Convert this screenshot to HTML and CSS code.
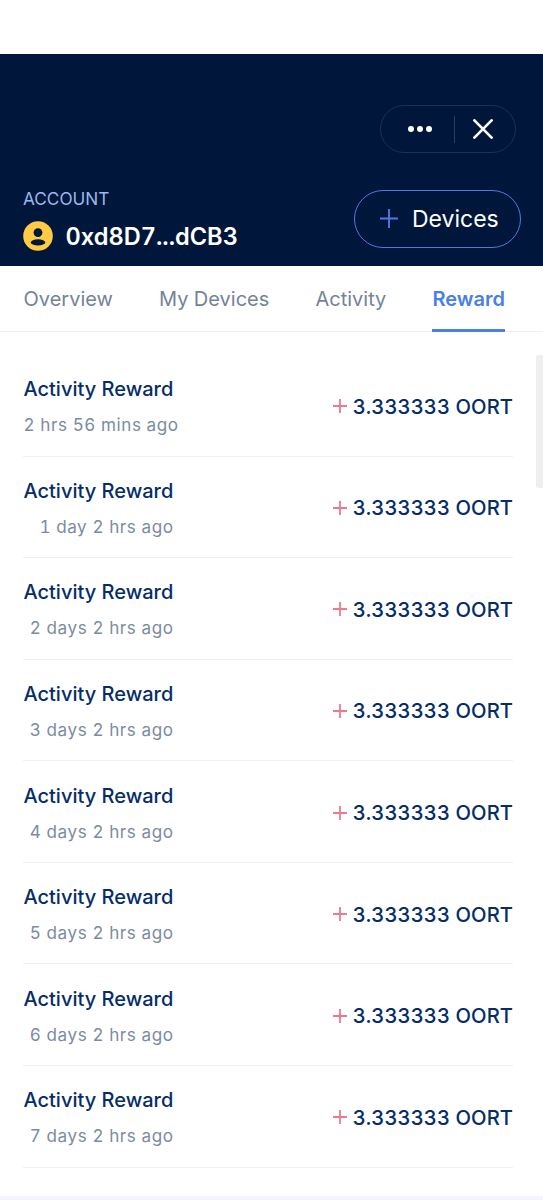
FILE: index.html
```html
<!DOCTYPE html>
<html lang="en">
<head>
    <meta charset="UTF-8">
    <title>Rewards</title>
    <link rel="stylesheet" href="styles.css">
</head>
<body>

    <!-- Header -->
    <div class="header">
        <div class="capsule">
            <svg class="dots" width="24" height="6" viewBox="0 0 24 6">
                <circle cx="3" cy="3" r="3" />
                <circle cx="12" cy="3" r="3" />
                <circle cx="21" cy="3" r="3" />
            </svg>
            <span class="divider"></span>
            <svg class="close" width="20" height="20" viewBox="0 0 20 20">
                <path d="M1.4 1.4 L18.6 18.6 M18.6 1.4 L1.4 18.6" />
            </svg>
        </div>
        <div class="account-row">
            <div class="account">
                <div class="account-label">ACCOUNT</div>
                <div class="address">
                    <svg width="30" height="30" viewBox="0 0 30 30">
                        <circle cx="15" cy="15" r="14.8" fill="#ffcb47" />
                        <circle cx="15" cy="11.6" r="4.4" fill="#00163b" />
                        <ellipse cx="15" cy="21.4" rx="7.2" ry="3.1" fill="#00163b" />
                    </svg>
                    <span>0xd8D7...dCB3</span>
                </div>
            </div>
            <button class="devices-btn">
                <svg width="18" height="20" viewBox="0 0 18 20">
                    <path d="M0 9.5 H18 M9 0 V19" />
                </svg>
                <span>Devices</span>
            </button>
        </div>
    </div>

    <!-- Navigation -->
    <nav>
        <a class="tab-overview">Overview</a>
        <a class="tab-devices">My Devices</a>
        <a class="tab-activity">Activity</a>
        <a class="active">Reward</a>
    </nav>

    <!-- Reward list -->
    <div class="rewards" id="rewards"></div>
    <div class="scrollbar"></div>
    <div class="bottom"></div>

    <script>
        const times = [
            '2 hrs 56 mins ago',
            '1 day 2 hrs ago',
            '2 days 2 hrs ago',
            '3 days 2 hrs ago',
            '4 days 2 hrs ago',
            '5 days 2 hrs ago',
            '6 days 2 hrs ago',
            '7 days 2 hrs ago'
        ];

        document.getElementById('rewards').innerHTML = times.map(time => `
            <div class="reward">
                <div class="info">
                    <div class="title">Activity Reward</div>
                    <div class="time">${time}</div>
                </div>
                <div class="amount">
                    <svg width="14" height="14" viewBox="0 0 14 14"><path d="M0 7 H14 M7 0 V14" /></svg>
                    <span>3.333333 OORT</span>
                </div>
            </div>`).join('');
    </script>
</body>
</html>
```
FILE: styles.css
```css
* {
    box-sizing: border-box;
}

body {
    font-family: Inter, "Liberation Sans", sans-serif;
    font-variant-numeric: tabular-nums;
    background: white;
    height: 1200px;
    margin: 0;
    padding-top: 53.5px;
    display: flex;
    flex-direction: column;
    overflow: hidden;
}

svg {
    display: block;
    flex: none;
}

/* Header Styles */
.header {
    background-color: #00163b;
    height: 212px;
    flex: none;
    padding: 51.5px 22px 0 23px;
}

.capsule {
    display: flex;
    align-items: center;
    width: 136px;
    height: 48px;
    margin-left: auto;
    margin-right: 5.5px;
    padding-left: 27px;
    border: 1px solid #1c3153;
    border-radius: 24px;
}

    .capsule .dots {
        fill: white;
    }

    .capsule .divider {
        width: 1.5px;
        height: 27px;
        margin: 0 18px 0 22px;
        background: #2c3e5c;
    }

    .capsule .close {
        stroke: white;
        stroke-width: 2.7;
        stroke-linecap: round;
    }

.account-row {
    display: flex;
    justify-content: space-between;
    margin-top: 37px;
}

.account-label {
    color: #9db8ea;
    font-size: 17.2px;
    line-height: 18px;
}

.address {
    display: flex;
    align-items: center;
    gap: 12.5px;
    height: 30px;
    margin-top: 13px;
    color: white;
    font-size: 23.6px;
    font-weight: 600;
}

.devices-btn {
    display: flex;
    align-items: center;
    gap: 14.5px;
    width: 167px;
    height: 58px;
    padding: 0 0 0 24.5px;
    border: 1.5px solid #5079e2;
    border-radius: 29px;
    background: none;
    color: white;
    font-family: inherit;
    font-size: 23px;
}

    .devices-btn svg {
        fill: none;
        stroke: #5079e2;
        stroke-width: 1.9;
    }

nav {
    display: flex;
    justify-content: space-between;
    flex: none;
    height: 66px;
    padding: 0 38px 0 23.5px;
    border-bottom: 1px solid #efeff1;
    color: #748399;
    font-size: 20px;
}

    nav a {
        height: 66px;
        line-height: 67px;
    }

    nav a.active {
        color: #4a80e6;
        font-weight: 600;
        border-bottom: 3px solid #4a80e6;
    }

.rewards {
    flex: none;
    margin: 23.5px 30px 0 23px;
}

.reward {
    display: flex;
    align-items: center;
    justify-content: space-between;
    height: 101.57px;
    padding-top: 3px;
    border-bottom: 1.5px solid #efeff1;
}

.info {
    width: 150.5px;
    padding-top: 1px;
    padding-left: 0.5px;
    white-space: nowrap;
}

.title {
    color: #052d68;
    font-size: 20px;
    font-weight: 500;
    line-height: 36px;
}

.time {
    color: #7c8ba3;
    font-size: 17.1px;
    letter-spacing: 0.55px;
    line-height: 36px;
    text-align: right;
}

.amount {
    display: flex;
    align-items: center;
    gap: 5.5px;
    padding-bottom: 1px;
    color: #052d68;
    font-size: 20.2px;
    font-weight: 500;
    letter-spacing: 0.05px;
}

    .amount svg {
        stroke: #f0788b;
        stroke-width: 1.8;
    }

/* Scroll thumb over the right edge of the list */
.scrollbar {
    position: absolute;
    top: 355px;
    right: 0;
    width: 7px;
    height: 133px;
    border-radius: 3px 0 0 3px;
    background: #efefef;
}

.bottom {
    height: 4.5px;
    margin-top: auto;
    background: #f3f4fd;
}
```
